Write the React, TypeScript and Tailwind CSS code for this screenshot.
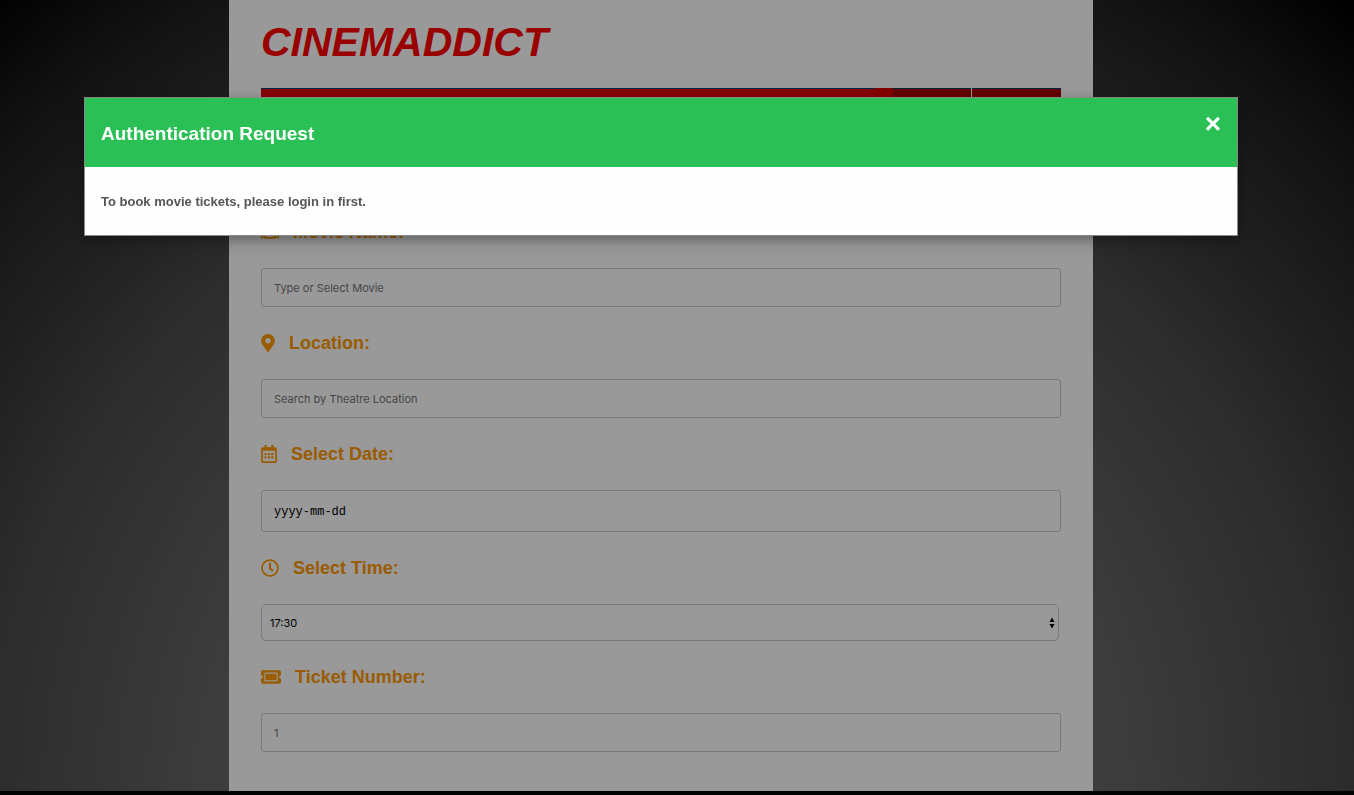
import type { ReactNode } from "react";
import { FaFilm, FaMapMarkerAlt, FaRegCalendarAlt, FaRegClock, FaTicketAlt } from "react-icons/fa";

const textInput =
  "block w-full rounded-[3px] border border-[#cccccc] bg-transparent px-3 font-['Inter',sans-serif] text-[11px] placeholder:text-[#757575] placeholder:opacity-100";

function FieldLabel({ id, icon, children }: { id: string; icon: ReactNode; children: ReactNode }) {
  return (
    <label htmlFor={id} className="flex h-18 items-center gap-[14px] text-lg font-bold text-[#ff9900]">
      {icon}
      <span>{children}</span>
    </label>
  );
}

export default function App() {
  return (
    <div className="flex min-h-screen flex-col bg-[#040808] font-['Liberation_Sans',Arial,sans-serif]">
      <div className="bg-[radial-gradient(circle_farthest-corner_at_49%_100%,#808080_0%,#676767_42%,#4b4b4b_64%,#363636_75%,#202020_87%,#000000_100%)] pr-8">
        <main className="mx-auto w-full max-w-[864px] bg-white px-8 pb-[39px]">
          <header className="flex h-22 items-center pb-1">
            <h1 className="text-[41px] leading-none font-bold text-[#ff0000] italic">CINEMADDICT</h1>
          </header>
          <nav aria-label="Main" className="mb-15 flex h-12">
            <div className="flex-1 border-t border-[#004080] bg-[#dc0000]" />
            <div className="w-[18px] bg-[#dc0000]" />
            <div className="w-[78px] border-t border-[#004080] bg-[#a60000]" />
            <div className="ml-px w-[89px] border-t border-[#004080] bg-[#a60000]" />
          </nav>
          <form>
            <FieldLabel id="movie" icon={<FaFilm className="size-[18px]" />}>
              Movie Name:
            </FieldLabel>
            <input id="movie" type="text" placeholder="Type or Select Movie" className={`${textInput} h-[39px]`} />

            <FieldLabel id="location" icon={<FaMapMarkerAlt className="h-[18px] w-[14px]" />}>
              Location:
            </FieldLabel>
            <input id="location" type="text" placeholder="Search by Theatre Location" className={`${textInput} h-[39px]`} />

            <FieldLabel id="date" icon={<FaRegCalendarAlt className="h-[18px] w-4" />}>
              Select Date:
            </FieldLabel>
            <input
              id="date"
              type="text"
              placeholder="yyyy-mm-dd"
              className="block h-[42px] w-full rounded-[3px] border border-[#cccccc] bg-transparent px-3 pt-[2px] font-['Liberation_Mono',monospace] text-xs placeholder:text-black placeholder:opacity-100"
            />

            <FieldLabel id="time" icon={<FaRegClock className="size-[18px]" />}>
              Select Time:
            </FieldLabel>
            <div className="relative mr-[2px]">
              <select
                id="time"
                className="block h-[37px] w-full appearance-none rounded-[5px] border border-[#cccccc] bg-transparent px-2 pt-px font-['Inter',sans-serif] text-[11px] text-black"
              >
                <option>17:30</option>
              </select>
              <svg
                viewBox="0 0 6 12"
                className="pointer-events-none absolute top-1/2 right-1 h-3 w-[6px] -translate-y-1/2"
                aria-hidden="true"
              >
                <path d="M3 0.5 5.5 5h-5zM3 11.5 0.5 7h5z" fill="#000" />
              </svg>
            </div>

            <FieldLabel id="tickets" icon={<FaTicketAlt className="h-[18px] w-5" />}>
              Ticket Number:
            </FieldLabel>
            <input id="tickets" type="text" placeholder="1" className={`${textInput} h-[39px]`} />
          </form>
        </main>
      </div>

      <div className="fixed inset-0 bg-black/40 pt-[97px] pr-8">
        <section
          role="dialog"
          aria-labelledby="dialog-title"
          className="mx-auto max-w-[1154px] border border-[#888888] bg-[#fefefe] shadow-[0_4px_8px_rgba(0,0,0,0.2),0_6px_20px_rgba(0,0,0,0.19)]"
        >
          <header className="flex h-[69px] items-start justify-between bg-[#2bc055] px-4 text-white">
            <h2 id="dialog-title" className="self-center pt-1 text-[19px] font-bold">
              Authentication Request
            </h2>
            <button type="button" aria-label="Close" className="pt-[10px] text-[28px] leading-8 font-bold">
              ×
            </button>
          </header>
          <div className="flex h-17 items-center px-4 pt-[2px]">
            <p className="text-[13px] font-bold text-[#555555]">To book movie tickets, please login in first.</p>
          </div>
        </section>
      </div>
    </div>
  );
}
